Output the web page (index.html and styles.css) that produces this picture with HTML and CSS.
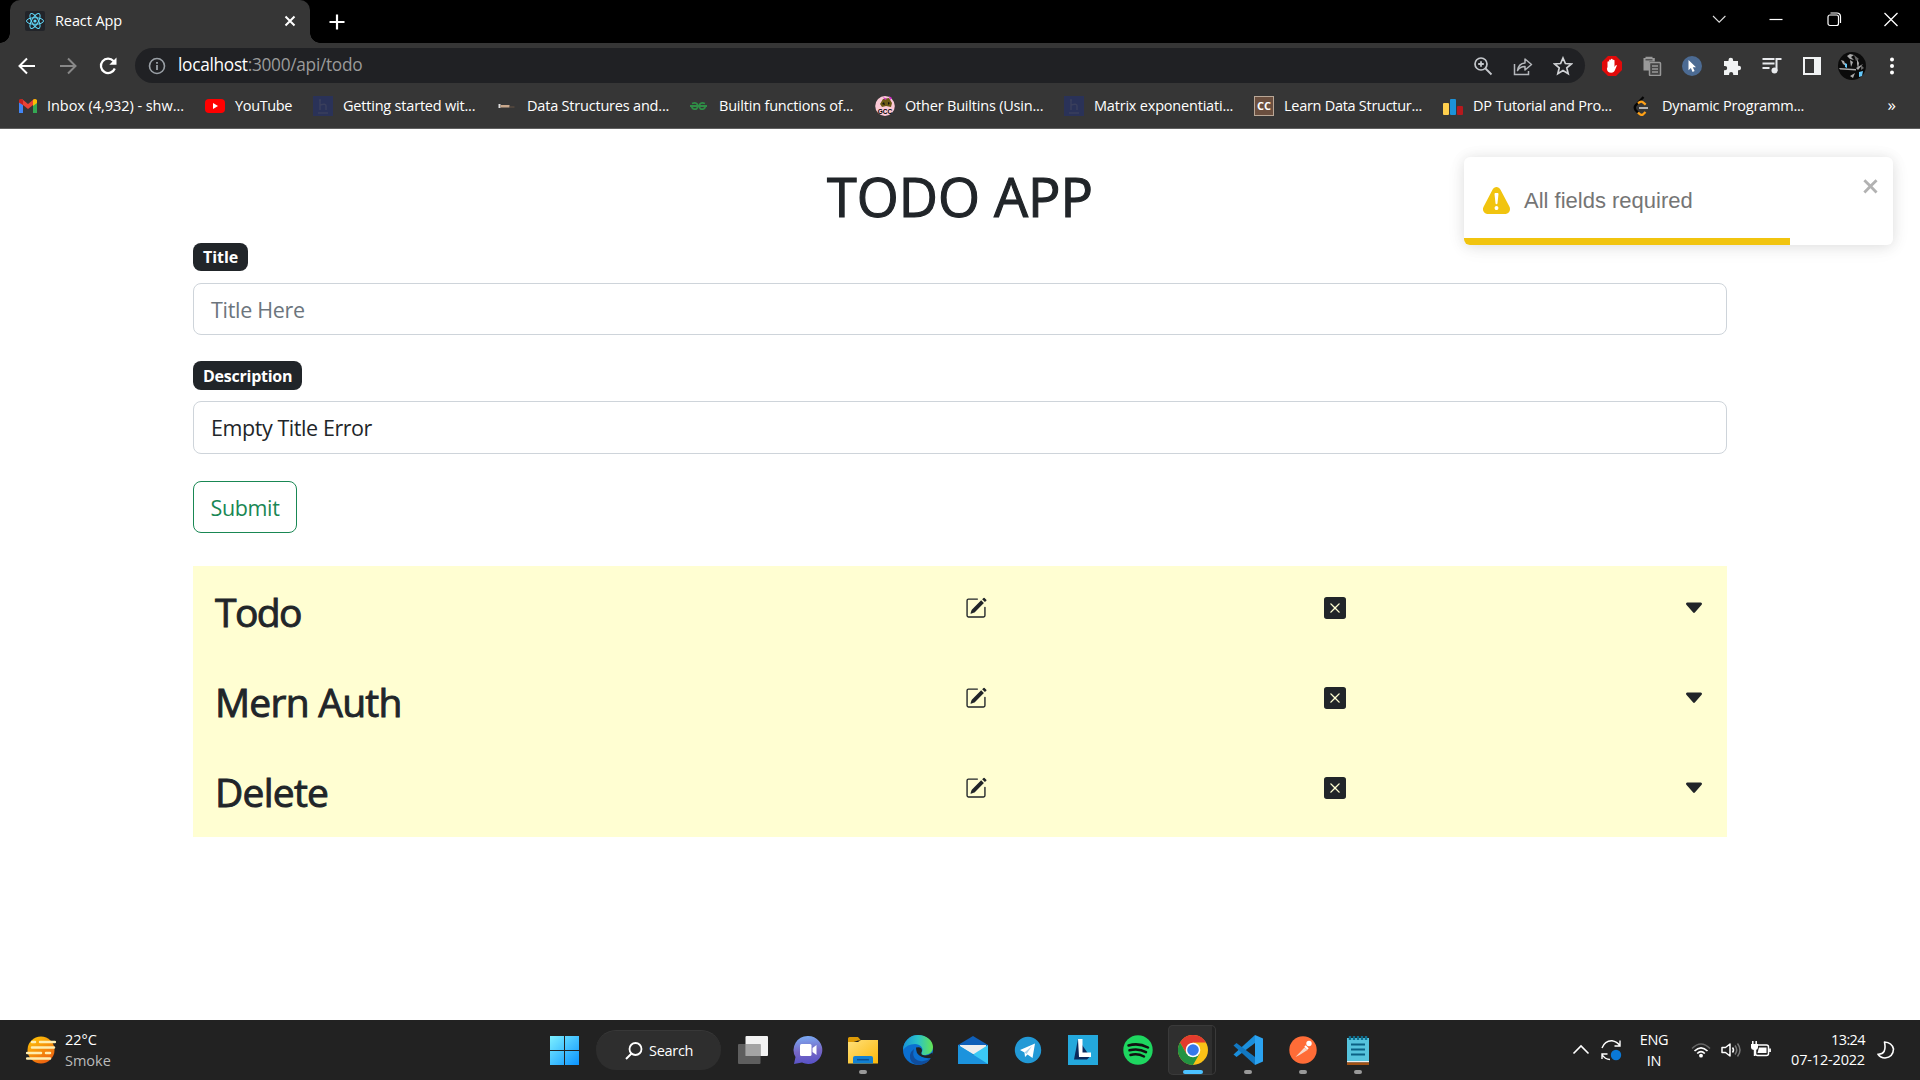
FILE: index.html
```html
<!DOCTYPE html>
<html lang="en">
<head>
<meta charset="utf-8">
<title>React App</title>
<link rel="stylesheet" href="styles.css">
</head>
<body>
<svg class="defs" aria-hidden="true">
  <symbol id="i-edit" viewBox="0 0 16 16"><path d="M15.502 1.94a.5.5 0 0 1 0 .706L14.459 3.69l-2-2L13.502.646a.5.5 0 0 1 .707 0l1.293 1.293zm-1.75 2.456-2-2L4.939 9.21a.5.5 0 0 0-.121.196l-.805 2.414a.25.25 0 0 0 .316.316l2.414-.805a.5.5 0 0 0 .196-.12l6.813-6.814z"/><path fill-rule="evenodd" d="M1 13.5A1.5 1.5 0 0 0 2.5 15h11a1.5 1.5 0 0 0 1.500-1.500v-6a.5.5 0 0 0-1 0v6a.5.5 0 0 1-.5.5h-11a.5.5 0 0 1-.5-.5v-11a.5.5 0 0 1 .5-.5H9a.5.5 0 0 0 0-1H2.500A1.500 1.500 0 0 0 1 2.500v11z"/></symbol>
  <symbol id="i-delete" viewBox="0 0 16 16"><path d="M2 0a2 2 0 0 0-2 2v12a2 2 0 0 0 2 2h12a2 2 0 0 0 2-2V2a2 2 0 0 0-2-2H2zm3.354 4.646L8 7.293l2.646-2.647a.5.5 0 0 1 .708.708L8.707 8l2.647 2.646a.5.5 0 0 1-.708.708L8 8.707l-2.646 2.647a.5.5 0 0 1-.708-.708L7.293 8 4.646 5.354a.5.5 0 1 1 .708-.708z"/></symbol>
  <symbol id="i-caret" viewBox="0 0 16 16"><path d="M7.247 11.140 2.451 5.658C1.885 5.013 2.345 4 3.204 4h9.592a1 1 0 0 1 .753 1.659l-4.796 5.480a1 1 0 0 1-1.506 0z"/></symbol>
  <symbol id="i-h" viewBox="0 0 20 20"><path fill="#2a3258" d="M0 0h20v20H0z"/><path d="M7 4v10M7 9q6-2 6 1v4M5 17h10M6 4h2" fill="none" stroke="#3a3f5c" stroke-width="1.500"/></symbol>
</svg>

<header class="browser">
  <div class="tabstrip">
    <div class="tab">
      <svg class="tab-icon" viewBox="0 0 20 20"><rect width="20" height="20" rx="2" fill="#222429"/><g fill="none" stroke="#61dafb" stroke-width="1"><ellipse cx="10" cy="10" rx="8.500" ry="3.300"/><ellipse cx="10" cy="10" rx="8.500" ry="3.300" transform="rotate(60 10 10)"/><ellipse cx="10" cy="10" rx="8.500" ry="3.300" transform="rotate(120 10 10)"/></g><circle cx="10" cy="10" r="1.600" fill="#61dafb"/></svg>
      <span class="tab-title">React App</span>
      <svg class="tab-close" viewBox="0 0 12 12"><path d="M1.500 1.500l9 9M10.500 1.500l-9 9" stroke="#fff" stroke-width="2" fill="none"/></svg>
    </div>
    <svg class="new-tab" viewBox="0 0 16 16"><path d="M8 .5v15M.5 8h15" stroke="#fff" stroke-width="2.200"/></svg>
    <div class="window-controls">
      <svg viewBox="0 0 16 16"><path d="M2 5l6.200 6.200L14.400 5" fill="none" stroke="#ddd" stroke-width="1.100"/></svg>
      <svg viewBox="0 0 16 16"><path d="M1.500 8.500h13" stroke="#fff" stroke-width="1.200"/></svg>
      <svg viewBox="0 0 16 16"><rect x="2" y="4" width="10.500" height="10.500" rx="2" fill="none" stroke="#fff" stroke-width="1.200"/><path d="M4.500 2H11a3.500 3.500 0 0 1 3.500 3.500V12" fill="none" stroke="#fff" stroke-width="1.200"/></svg>
      <svg viewBox="0 0 16 16"><path d="M1.500 2l13 13M14.500 2l-13 13" stroke="#fff" stroke-width="1.300"/></svg>
    </div>
  </div>

  <div class="toolbar">
    <nav class="nav-buttons">
      <svg viewBox="0 0 20 20"><path d="M18 10H3M10 2.500L2.500 10l7.500 7.500" fill="none" stroke="#fff" stroke-width="2"/></svg>
      <svg viewBox="0 0 20 20"><path d="M2 10h15M10 2.500l7.500 7.500-7.500 7.500" fill="none" stroke="#888" stroke-width="2"/></svg>
      <svg viewBox="0 0 20 20"><path d="M16.800 12.500A7.200 7.200 0 1 1 15.500 5l1.500 1.700" fill="none" stroke="#fff" stroke-width="2.200"/><path d="M18.500 1.500v7.200h-7.200z" fill="#fff"/></svg>
    </nav>
    <div class="omnibox">
      <svg class="info" viewBox="0 0 18 18"><circle cx="9" cy="9" r="7.500" fill="none" stroke="#9aa0a6" stroke-width="1.600"/><path d="M9 8v5M9 5v1.800" stroke="#9aa0a6" stroke-width="1.800"/></svg>
      <span class="url"><b>localhost</b>:3000/api/todo</span>
      <div class="omni-actions">
        <svg viewBox="0 0 20 20"><circle cx="8" cy="8" r="6" fill="none" stroke="#c4c7cb" stroke-width="1.700"/><path d="M12.500 12.500l6 6M5.200 8h5.600M8 5.200v5.600" fill="none" stroke="#c4c7cb" stroke-width="1.800"/></svg>
        <svg viewBox="0 0 20 20"><path d="M1.500 8v10.500h14V15" fill="none" stroke="#b4b7bb" stroke-width="1.500"/><path d="M4.500 14.500q1-7 7.500-7.500V3l6.500 5.500-6.500 5.500v-3.500q-5 0-7.500 4z" fill="none" stroke="#b4b7bb" stroke-width="1.500" stroke-linejoin="round"/></svg>
        <svg viewBox="0 0 20 20"><path d="M10 2l2.400 5.500 6 .5-4.600 3.900 1.400 5.800-5.200-3.100-5.200 3.100 1.400-5.800L1.600 8l6-.5z" fill="none" stroke="#d0d2d5" stroke-width="1.700"/></svg>
      </div>
    </div>
    <div class="extensions">
      <svg viewBox="0 0 20 20"><path d="M6 0h8l6 6v8l-6 6H6l-6-6V6z" fill="#e10a0a"/><path d="M5.500 11V6.200q0-.9.800-.9t.8.900V9V4.400q0-.9.900-.9t.9.900V8.500V3.600q0-.9.900-.9t.9.900v5V4.600q0-.9.900-.9t.9.900V11l1-1.600q.8-.8 1.400 0l-1.800 4.300q-1 3-3.900 3-4 0-4.300-4z" fill="#fff"/></svg>
      <svg viewBox="0 0 20 20"><path d="M1.500 2h2V.8h7V2h2.300v3.500H7.500v9h-6z" fill="#999"/><path d="M3.500 3.800h7" stroke="#444" stroke-width="1.200"/><rect x="7.500" y="6.500" width="11" height="13" rx="1" fill="#454545" stroke="#999" stroke-width="1.500"/><path d="M10 10h6M10 13h6M10 16h6" stroke="#999" stroke-width="1.400"/></svg>
      <svg viewBox="0 0 20 20"><circle cx="10" cy="10" r="10" fill="#4c6b93"/><path d="M6.500 4l7.500 7.200h-3.200l1.800 3.800-2 .9-1.700-3.900-2.400 2.200z" fill="#fff"/></svg>
      <svg viewBox="0 0 20 20"><path d="M2 5h4.500V4a2.300 2.300 0 0 1 4.600 0v1H16v4.700h.8a2.200 2.200 0 0 1 0 4.500H16V19h-4.800v-1a2 2 0 0 0-4.100 0v1H2v-4.700h1a2.200 2.200 0 0 0 0-4.400H2z" fill="#f1f3f4"/></svg>
      <svg viewBox="0 0 20 20"><path d="M.5 3h12M.5 7.500h12M.5 12h7M14.500 15V3h5" fill="none" stroke="#e8eaed" stroke-width="2"/><circle cx="12.500" cy="14.500" r="3" fill="#e8eaed"/></svg>
      <svg viewBox="0 0 20 20"><rect x="2" y="2" width="16" height="16" fill="none" stroke="#f1f3f4" stroke-width="2"/><path d="M12 2h6v16h-6z" fill="#f1f3f4"/></svg>
      <svg class="avatar" viewBox="0 0 28 28"><circle cx="14" cy="14" r="14" fill="#0b0b0b"/><path d="M9 4l3-2 4 1-3 2 3 3-4-1zM3 8l3 1 2 5-3-2zM19 7l2 4-1 6-1-5zM1 16l17 1v1.500L2 17.500zM12 8l3 2-2 5zM12 24l5-3-2 5zM18 16l7-4-5 6z" fill="#aaa"/><path d="M7 11l2 1v4l-2-1zM21 20l4-1-1 5-3 1z" fill="#65c8fa"/><path d="M16 3l5 4-3 2zM23 13l3 3-3 2z" fill="#666"/></svg>
      <svg viewBox="0 0 20 20"><circle cx="10" cy="3.500" r="2" fill="#fff"/><circle cx="10" cy="10" r="2" fill="#fff"/><circle cx="10" cy="16.500" r="2" fill="#fff"/></svg>
    </div>
  </div>

  <div class="bookmarks">
    <a class="bm bm-mail"><svg viewBox="0 0 20 20"><path d="M1 5v12h4V9l5 4 5-4v8h4V5l-3-2-6 5-6-5z" fill="#ea4335"/><path d="M1 6v11h4V9z" fill="#4285f4"/><path d="M19 6v11h-4V9z" fill="#34a853"/><path d="M15 4q2-2 4 0v3l-4 3z" fill="#fbbc04"/><path d="M1 4q1-2 4 0v5L1 6.500z" fill="#c5221f"/></svg><span>Inbox (4,932) - shw...</span></a>
    <a class="bm bm-yt"><svg viewBox="0 0 20 20"><rect y="3" width="20" height="14" rx="4" fill="#f00"/><path d="M8 7l5 3-5 3z" fill="#fff"/></svg><span>YouTube</span></a>
    <a class="bm bm-start"><svg><use href="#i-h"/></svg><span>Getting started wit...</span></a>
    <a class="bm bm-ds"><svg viewBox="0 0 20 20"><path d="M1.500 8h2v4h-2z" fill="#ddd"/><path d="M3.500 9h9v2.500h-9z" fill="#c9a88c"/><path d="M12.500 10.500h5v1h-5z" fill="#665243"/></svg><span>Data Structures and...</span></a>
    <a class="bm bm-gfg"><svg viewBox="0 0 20 20"><path d="M1 10h17M3 7.500q5.500-1.800 5.700 2.500-.2 4.200-4.200 2.900Q2.500 12 3 10M16 7.500q-5.500-1.800-5.700 2.500.2 4.200 4.200 2.900 2-.9 1.500-2.900" fill="none" stroke="#2f8d46" stroke-width="1.800"/></svg><span>Builtin functions of...</span></a>
    <a class="bm bm-gcc"><svg viewBox="0 0 20 20"><ellipse cx="10" cy="10" rx="9.800" ry="10" fill="#fbc9d6"/><path d="M5 8l3-5 6-1 3 5-1 4-5-1-4 1z" fill="#6b5a14"/><path d="M8 1l4 2-2 1zM14 0l3 2-2 2z" fill="#d62bd0"/><path d="M7 8l2-2 1 3zM13 6l2 1-2 2z" fill="#111"/><text class="gcc-text" x="10" y="18" text-anchor="middle">GCC</text></svg><span>Other Builtins (Usin...</span></a>
    <a class="bm bm-matrix"><svg><use href="#i-h"/></svg><span>Matrix exponentiati...</span></a>
    <a class="bm bm-cc"><svg viewBox="0 0 20 20"><rect x=".5" y=".5" width="19" height="19" fill="#6b4f3f" stroke="#b9a796"/><text class="cc-text" x="10" y="14" text-anchor="middle">CC</text></svg><span>Learn Data Structur...</span></a>
    <a class="bm bm-dp"><svg viewBox="0 0 20 20"><rect y="7" width="6" height="12" rx="1" fill="#ffcf4d"/><rect x="7" y="3" width="6" height="16" rx="1" fill="#1c92d8"/><rect x="14" y="10" width="6" height="9" rx="1" fill="#b7191d"/></svg><span>DP Tutorial and Pro...</span></a>
    <a class="bm bm-lc"><svg viewBox="0 0 20 20"><path d="M11.500 1L3.500 9.500q-1.500 2 0 4.500l2.500 2.500" fill="none" stroke="#050505" stroke-width="2.300"/><path d="M6 7.500l1.500-1.300q1.700-1.200 3.200 0l3 2.500M6 16.500q3 3.500 5 2l2.500-2.500" fill="none" stroke="#ffa116" stroke-width="2.300"/><path d="M7 12h9" stroke="#b3b3b3" stroke-width="2"/></svg><span>Dynamic Programm...</span></a>
    <span class="more">»</span>
  </div>
</header>

<main class="page">
  <h1>TODO APP</h1>
  <form class="todo-form">
    <label class="badge">Title</label>
    <div class="field placeholder">Title Here</div>
    <label class="badge second">Description</label>
    <div class="field">Empty Title Error</div>
    <button class="submit" type="button">Submit</button>
  </form>
  <section class="todo-list">
    <div class="todo"><h3 class="tight">Todo</h3><svg><use href="#i-edit"/></svg><svg><use href="#i-delete"/></svg><svg><use href="#i-caret"/></svg></div>
    <div class="todo"><h3>Mern Auth</h3><svg><use href="#i-edit"/></svg><svg><use href="#i-delete"/></svg><svg><use href="#i-caret"/></svg></div>
    <div class="todo"><h3>Delete</h3><svg><use href="#i-edit"/></svg><svg><use href="#i-delete"/></svg><svg><use href="#i-caret"/></svg></div>
  </section>
</main>

<aside class="toast">
  <div class="toast-body">
    <svg class="warn" viewBox="0 0 24 24"><path fill="#f1c40f" d="M23.320 17.191 15.438 2.184C14.728.833 13.416 0 11.996 0c-1.420 0-2.733.833-3.443 2.184L.533 17.448a4.744 4.744 0 0 0 0 4.368C1.243 23.167 2.555 24 3.975 24h16.050C22.220 24 24 22.044 24 19.632c0-.904-.251-1.746-.680-2.440zm-9.622 1.460c0 1.033-.724 1.823-1.698 1.823s-1.698-.790-1.698-1.822v-.043c0-1.028.724-1.822 1.698-1.822s1.698.790 1.698 1.822v.043zm.039-12.285-.840 8.060c-.057.581-.408.943-.897.943-.490 0-.840-.367-.896-.942l-.840-8.065c-.057-.624.250-1.095.779-1.095h1.910c.528.005.840.476.784 1.100z"/></svg>
    <span class="toast-text">All fields required</span>
    <svg class="toast-close" viewBox="0 0 14 16"><path fill-rule="evenodd" d="M7.710 8.230l3.750 3.750-1.480 1.480-3.750-3.750-3.750 3.750L1 11.980l3.750-3.750L1 4.480 2.480 3l3.750 3.750L9.980 3l1.480 1.480-3.750 3.750z"/></svg>
  </div>
  <div class="toast-progress"></div>
</aside>

<footer class="taskbar">
  <div class="weather">
    <svg viewBox="0 0 30 30"><defs><linearGradient id="sun" x2=".6" y2="1"><stop stop-color="#ffcb05"/><stop offset="1" stop-color="#ee6410"/></linearGradient></defs><circle cx="15" cy="15" r="13.500" fill="url(#sun)"/><path d="M6 7h3M14 7h15M6 12.500h22M1 18h14M20 18h4M1 23.500h23" stroke="#ffeeb0" stroke-width="2.500" stroke-linecap="round"/></svg>
    <div class="weather-text">22°C<br><span class="dim">Smoke</span></div>
  </div>
  <div class="apps">
    <svg class="start" viewBox="0 0 29 29"><defs><linearGradient id="win" x2="1" y2="1"><stop stop-color="#7df0ff"/><stop offset="1" stop-color="#0a93ff"/></linearGradient></defs><path fill="url(#win)" d="M0 0h14v14H0zM15 0h14v14H15zM0 15h14v14H0zM15 15h14v14H15z"/></svg>
    <div class="search"><svg viewBox="0 0 18 18"><circle cx="10.500" cy="7" r="6" fill="none" stroke="#fff" stroke-width="1.800"/><path d="M6.500 11.500L1 17" stroke="#fff" stroke-width="2"/></svg><span>Search</span></div>
    <div class="app"><svg viewBox="0 0 30 30"><rect x="7.500" y="1" width="22.500" height="20" rx="1" fill="#f2f2f2"/><rect y="9" width="22.500" height="20" rx="1" fill="#666" opacity=".88"/><path d="M7.500 9h15v12h-15z" fill="#a4a4a4"/></svg></div>
    <div class="app"><svg viewBox="0 0 30 30"><defs><linearGradient id="chat" x1=".9" y2="1"><stop stop-color="#7aa5f0"/><stop offset=".5" stop-color="#7767c4"/><stop offset="1" stop-color="#5450c8"/></linearGradient></defs><path d="M15 1a14 14 0 1 1-6 26.500L1 29l1.500-7A14 14 0 0 1 15 1z" fill="url(#chat)"/><rect x="7" y="9" width="11.500" height="12" rx="1.500" fill="#fff"/><path d="M19.500 13l4-3v10l-4-3z" fill="#fff"/></svg></div>
    <div class="app open"><svg viewBox="0 0 30 30"><defs><linearGradient id="fold" x2="1" y2="1"><stop stop-color="#ffe07a"/><stop offset="1" stop-color="#fbb80a"/></linearGradient></defs><path d="M0 3.500Q0 2 1.500 2H10l3 3.500h-3L0 9z" fill="#dd9a06"/><path d="M0 7h10l3-2h17v23.500H0z" fill="url(#fold)"/><path d="M5 28.500V23q0-2 2-2h16q2 0 2 2v5.500z" fill="#1180d2"/><path d="M9 24.700h12" stroke="#0a4f92" stroke-width="1.500"/></svg></div>
    <div class="app"><svg viewBox="0 0 30 30"><defs><linearGradient id="edg" x2="1"><stop stop-color="#1792d8"/><stop offset=".5" stop-color="#2bc3c7"/><stop offset="1" stop-color="#65e552"/></linearGradient></defs><circle cx="15" cy="15" r="15" fill="#0b6fd0"/><path d="M0 15A15 15 0 0 1 15 0c9 0 15 6 15 12 0 6-5 8-9 8-3 0-3-1-2-3 2-4-2-8-7-8Q4 9 0 15z" fill="url(#edg)"/><path d="M11 14q-3 10 6 12 6 1 11-3-4 7-13 7Q6 28 7 20q1-4 4-6z" fill="#104d9c"/><path d="M13 12.500q6-1.500 6 3.500-2.500 4 3 4.500 4 0 7.500-3l.5 4-2 1.500q-10 1-14-5-1-2.500-1-5.500z" fill="#222"/></svg></div>
    <div class="app"><svg viewBox="0 0 30 30"><path d="M0 10L15 1l15 9v5H0z" fill="#0f5fb8"/><path d="M2 10h26v9H2z" fill="#eee"/><path d="M0 10l15 9L0 29z" fill="#1b9de2"/><path d="M30 10L0 29h30z" fill="#3bc9f5"/><path d="M0 10l30 19H0z" fill="#1c93dd"/></svg></div>
    <div class="app"><svg viewBox="0 0 30 30"><circle cx="15" cy="15" r="13.200" fill="#2299d6"/><path d="M7 15l15-6.500-2.500 14.500-5-3.500-2.500 2.500-.5-4.500z" fill="#fff"/><path d="M11.500 17.500l7.500-6.500-5.500 8z" fill="#a9d2ea"/></svg></div>
    <div class="app"><svg viewBox="0 0 30 30"><path d="M0 0h30v30H0z" fill="#24a8dc"/><path d="M10 4L6 24.500h13l3-3z" fill="#0b2a5c"/><path d="M10 4h4.500v13.500H23v4.500H11z" fill="#fff"/></svg></div>
    <div class="app"><svg viewBox="0 0 30 30"><circle cx="15" cy="15" r="14.700" fill="#1ed760"/><path d="M5.500 10.500q10-3 19.500 2M6.500 15.300q9-2.500 16.500 1.900M7.500 20q7-2 13.500 1.500" fill="none" stroke="#111" stroke-width="2.500" stroke-linecap="round"/></svg></div>
    <div class="app active"><svg viewBox="0 0 30 30"><circle cx="15" cy="15" r="15" fill="#fbc116"/><path d="M2 7.500A15 15 0 0 1 28 7.500H15l-6.500 11.200z" fill="#e33b2e"/><path d="M2 7.500A15 15 0 0 0 15 30l6.500-11.300-13 0z" fill="#229342"/><circle cx="15" cy="15" r="7.300" fill="#fff"/><circle cx="15" cy="15" r="5.800" fill="#3578ea"/></svg></div>
    <div class="app open"><svg viewBox="0 0 30 30"><path d="M22 0v8L3.500 22 .5 19.500z" fill="#1b8fdc"/><path d="M.5 10.500L3.500 8 22 22v8z" fill="#1278c2"/><path d="M22 0l8 3.500v23L22 30z" fill="#2ba3f1"/></svg></div>
    <div class="app open"><svg viewBox="0 0 30 30"><circle cx="15" cy="15" r="13.700" fill="#ff6c37"/><path d="M7.500 22l9-9.500 3 2.500-8 5z" fill="#f7d8c8"/><path d="M17 11l3 3" stroke="#fff" stroke-width="2"/><circle cx="21" cy="8.500" r="2.700" fill="#fff"/></svg></div>
    <div class="app open"><svg viewBox="0 0 30 30"><path d="M4 3h22v24H4z" fill="#56c4dd"/><path d="M4 26h22v1.500H4z" fill="#eee"/><path d="M4 27.500h22V30H4z" fill="#a35214"/><path d="M7 1v4M11 1v4M15 1v4M19 1v4M23 1v4" stroke="#0e6f90" stroke-width="2.400"/><path d="M8 9.500h14M8 14.500h14M8 19.500h14" stroke="#0b6184" stroke-width="2"/></svg></div>
  </div>
  <div class="tray">
    <svg class="t-up" viewBox="0 0 18 18"><path d="M1.500 12.500L9 5l7.500 7.500" fill="none" stroke="#fff" stroke-width="1.600"/></svg>
    <svg class="t-sync" viewBox="0 0 22 22"><path d="M2 9Q5 1.500 12 1.800q5 .8 8 5M20 1.500v5.500h-5.500M2 20v-5h5.500M2 15.500q3 5 8 5" fill="none" stroke="#fff" stroke-width="1.400"/><circle cx="16" cy="16" r="5.200" fill="#0a78d6"/></svg>
    <div class="lang">ENG<br>IN</div>
    <svg class="t-wifi" viewBox="0 0 20 20"><path d="M1 8.500q9-9 18 0" fill="none" stroke="#666" stroke-width="1.500"/><path d="M3.500 11q6.500-6.500 13 0M6.200 13.500q3.800-3.700 7.600 0" fill="none" stroke="#fff" stroke-width="1.700"/><circle cx="10" cy="15.700" r="1.900" fill="#fff"/></svg>
    <svg class="t-vol" viewBox="0 0 20 20"><path d="M1 7.500h3.500L9 4v12l-4.500-3.500H1z" fill="none" stroke="#fff" stroke-width="1.500" stroke-linejoin="round"/><path d="M11.500 7.500q2 2.500 0 5" fill="none" stroke="#fff" stroke-width="1.500"/><path d="M14 5.500q3.500 4.500 0 9M16.500 3.500q5 6.500 0 13" fill="none" stroke="#777" stroke-width="1.500"/></svg>
    <svg class="t-bat" viewBox="0 0 20 20"><rect x="4.500" y="5" width="13" height="10.500" rx="2" fill="none" stroke="#fff" stroke-width="1.500"/><path d="M8 7.500h7.500V13H6.500z" fill="#fff"/><path d="M19 8.500v3.500" stroke="#fff" stroke-width="1.800"/><path d="M0 4h7v3.500q0 2-2.500 2.500v6H2.800V10Q0 9.500 0 7.500z" fill="#fff"/><path d="M1.800 1v3M5.200 1v3" stroke="#fff" stroke-width="1.500"/></svg>
    <div class="clock"><span class="time">13:24</span><br>07-12-2022</div>
    <svg class="t-moon" viewBox="0 0 18 18"><path d="M7.500 1q7.500.5 9 7-.3 8-8.500 9-4.500-.3-7-3.800 9 .3 6.500-12.200z" fill="none" stroke="#fff" stroke-width="1.600" stroke-linejoin="round"/></svg>
  </div>
</footer>
</body>
</html>
```
FILE: styles.css
```css
* { box-sizing: border-box; }
body {
  margin: 0;
  height: 1080px;
  display: flex;
  flex-direction: column;
  background: #fff;
  color: #212529;
  font-family: "Open Sans", "Noto Sans", sans-serif;
  overflow: hidden;
}
svg { display: block; flex: none; }
.defs { width: 0; height: 0; position: absolute; }
span { white-space: nowrap; }

/* Browser chrome */
.browser { height: 129px; background: #363636; color: #fff; font-size: 14.5px; border-bottom: 1px solid #606060; }
.tabstrip { height: 43px; background: #000; display: flex; align-items: center; }
.tab {
  position: relative;
  width: 300px; height: 43px; margin-left: 10px; padding: 0 14px 2px 15px;
  display: flex; align-items: center;
  background: #363636; border-radius: 10px 10px 0 0;
}
.tab::before, .tab::after { content: ""; position: absolute; bottom: 0; width: 10px; height: 10px; }
.tab::before { left: -10px; background: radial-gradient(circle at 0 0, #000 9.5px, #363636 10px); }
.tab::after { right: -10px; background: radial-gradient(circle at 100% 0, #000 9.5px, #363636 10px); }
.tab-icon { width: 20px; height: 20px; }
.tab-title { margin-left: 10px; flex: none; letter-spacing: -.1px; }
.tab-close { width: 12px; height: 12px; margin-left: auto; }
.new-tab { width: 16px; height: 16px; margin-left: 19px; }
.window-controls { display: flex; gap: 41.3px; margin: 0 21px 6px auto; }
.window-controls svg { width: 16px; height: 16px; }

.toolbar { height: 45px; display: flex; align-items: center; }
.nav-buttons { width: 135px; padding-left: 17px; display: flex; gap: 20.5px; }
.nav-buttons svg { width: 20px; height: 20px; }
.omnibox { width: 1450px; height: 35px; border-radius: 18px; background: #202124; display: flex; align-items: center; padding: 0 12px 0 13px; }
.info { width: 18px; height: 18px; }
.url { margin: 0 0 2px 12px; font-size: 17.3px; letter-spacing: -.3px; color: #9a9a9a; }
.url b { font-weight: 400; color: #fff; }
.omni-actions { margin-left: auto; display: flex; gap: 20px; }
.omni-actions svg { width: 20px; height: 20px; }
.extensions { display: flex; align-items: center; gap: 20px; margin-left: 17px; }
.extensions svg { width: 20px; height: 20px; }
.extensions .avatar { width: 28px; height: 28px; margin: 0 -4px; }

.bookmarks { height: 40px; padding: 0 24px 4px 18px; display: flex; align-items: center; }
.bm { display: flex; align-items: center; gap: 10px; flex: none; }
.bm svg { width: 20px; height: 20px; }
.bm span { margin-bottom: 2px; letter-spacing: -.2px; }
.bm-mail { width: 187px; }
.bm-mail span { letter-spacing: -.05px; margin-left: -1px; }
.bm-yt { width: 108px; }
.bm-yt span { letter-spacing: -.35px; }
.bm-start { width: 184px; }
.bm-ds { width: 192px; }
.bm-gfg { width: 186px; }
.bm-gcc { width: 189px; }
.bm-matrix { width: 190px; }
.bm-cc { width: 189px; }
.bm-cc span { letter-spacing: -.28px; }
.bm-dp { width: 189px; }
.more { margin: 0 0 3px auto; font-size: 17px; }
.gcc-text { font: bold 6.5px "Liberation Sans", sans-serif; }
.cc-text { font: bold 11px "Open Sans", sans-serif; fill: #fff; }

/* Page */
.page { flex: 1; padding: 0 193px; }
h1 { margin: 29px 0 0; height: 85px; line-height: 76px; text-align: center; font-size: 54px; font-weight: 400; -webkit-text-stroke: 1.1px #212529; }
.todo-form { display: flex; flex-direction: column; align-items: flex-start; }
.badge { height: 28px; padding: 0 10px; border-radius: 8px; background: #212529; color: #fff; font-size: 16px; font-weight: 700; line-height: 29px; letter-spacing: -.05px; }
.badge.second { height: 29px; margin-top: 26px; line-height: 30px; letter-spacing: -.25px; }
.field { width: 100%; height: 52px; margin-top: 12px; padding: 0 17px; border: 1px solid #ced4da; border-radius: 8px; font-size: 21.5px; line-height: 52px; letter-spacing: -.43px; }
.second + .field { height: 53px; margin-top: 11px; }
.placeholder { color: #6c757d; letter-spacing: -.3px; }
.submit { width: 104px; height: 52px; margin-top: 27px; padding: 0; border: 1px solid #198754; border-radius: 8px; background: none; color: #198754; font: 21.5px/52px "Open Sans", sans-serif; letter-spacing: -.35px; }
.todo-list { margin-top: 33px; height: 271px; background: #fffed2; }
.todo { height: 90px; padding: 0 22px; display: grid; grid-template-columns: 750px 359px 359px 22px; }
.todo svg { width: 22px; height: 22px; margin-top: 31px; fill: #212529; }
.todo h3 { margin: 19px 0 0; font-size: 39px; line-height: 54px; font-weight: 400; letter-spacing: -.75px; -webkit-text-stroke: .9px #212529; }
.todo .tight { letter-spacing: -1.6px; }

/* Notification */
.toast { position: absolute; left: 1464px; top: 157px; width: 429px; height: 88px; border-radius: 6px; background: #fff; overflow: hidden; box-shadow: 0 1px 14px rgba(0,0,0,.1), 0 3px 21px rgba(0,0,0,.05); display: flex; flex-direction: column; }
.toast-body { flex: 1; display: flex; align-items: center; padding: 6px 12px 0 19px; }
.warn { width: 27px; height: 27px; }
.toast-text { margin-left: 14px; font: 22px "Liberation Sans", Arial, sans-serif; color: #757575; }
.toast-close { width: 19px; height: 22px; margin: 0 0 30px auto; fill: #b2b2b2; }
.toast-progress { width: 326px; height: 7px; background: #f1c40f; }

/* Taskbar */
.taskbar { height: 60px; background: #222; color: #fff; font-size: 14.5px; line-height: 20.5px; display: flex; align-items: center; }
.weather { width: 550px; padding-left: 26px; display: flex; align-items: center; gap: 9px; }
.weather svg { width: 30px; height: 30px; }
.weather-text { margin-top: 1px; }
.dim { color: #bbb; }
.apps { display: flex; align-items: center; }
.start { width: 29px; height: 29px; }
.search { width: 125px; height: 40px; margin: 0 9px 0 17px; padding-left: 29px; border-radius: 20px; background: #2e2e2e; border-top: 1px solid #383838; display: flex; align-items: center; gap: 6px; letter-spacing: -.3px; }
.search svg { width: 18px; height: 18px; }
.search span { margin-top: 1px; }
.app { position: relative; width: 46px; height: 50px; margin-right: 9px; display: flex; align-items: center; justify-content: center; border-radius: 5px; }
.app svg { width: 30px; height: 30px; }
.app.open::after, .app.active::after { content: ""; position: absolute; left: 19px; bottom: 1px; width: 8px; height: 4px; border-radius: 2px; background: #999; }
.app.active { background: linear-gradient(90deg, #2f2f2f 44px, #222 44px); width: 48px; margin: 0 9px 0 -2px; padding-left: 2px; box-shadow: inset 0 0 0 1px #3a3a3a; }
.app.active::after { left: 15px; width: 20px; background: #4cc2ff; }
.tray { margin-left: auto; display: flex; align-items: center; padding-right: 25px; }
.t-up { width: 18px; height: 18px; }
.t-sync { width: 22px; height: 22px; margin-left: 10px; }
.lang { width: 30px; margin: 1px 0 0 17px; text-align: center; letter-spacing: -.3px; }
.t-wifi { width: 20px; height: 20px; margin-left: 22px; }
.t-vol { width: 20px; height: 20px; margin-left: 10px; }
.t-bat { width: 20px; height: 20px; margin-left: 10px; }
.clock { width: 76px; margin-left: 18px; text-align: right; letter-spacing: -.17px; }
.time { letter-spacing: -.6px; }
.t-moon { width: 18px; height: 18px; margin-left: 12px; }
```
